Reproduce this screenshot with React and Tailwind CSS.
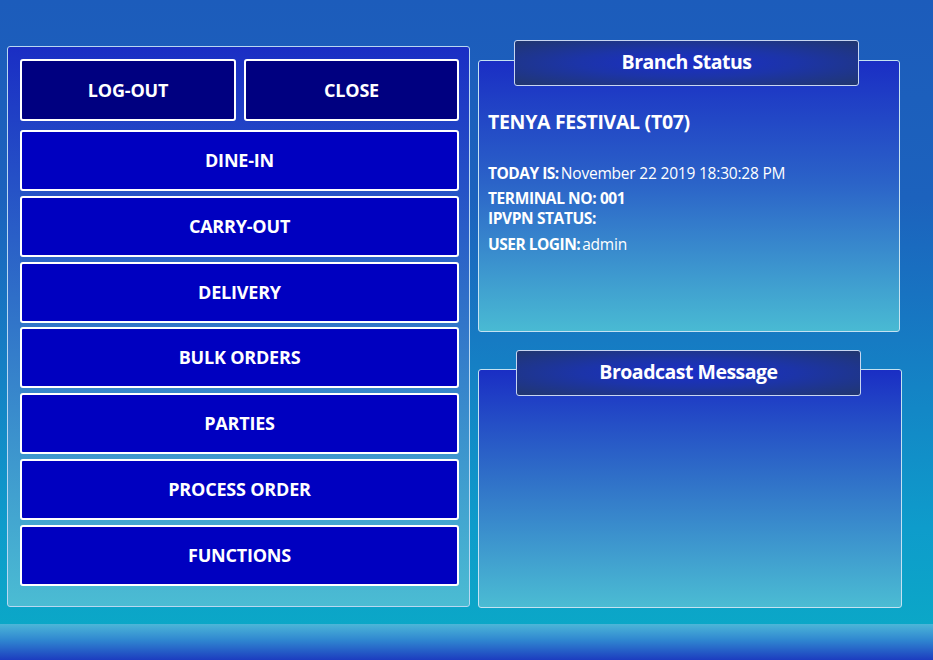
import React from "react";

const font = { fontFamily: '"Open Sans", "Noto Sans", sans-serif' };

function Btn({ children, dark, className = "" }) {
  return (
    <div
      className={`flex items-center justify-center rounded-[3px] border-2 border-white text-[18px] font-bold tracking-[-0.2px] text-white ${
        dark ? "bg-[#000080]" : "bg-[#0000c0]"
      } ${className}`}
    >
      {children}
    </div>
  );
}

function Tab({ children }) {
  return (
    <div className="relative z-10 mx-auto flex h-[46px] w-[345px] items-center justify-center rounded-[3px] border border-[#c8d6f2] bg-[radial-gradient(ellipse_at_center,#1a2ec8_0%,#1c34a8_45%,#21376f_100%)] pb-[3px] text-[19.5px] font-bold tracking-[-0.5px] text-white">
      {children}
    </div>
  );
}

export default function App() {
  const items = ["DINE-IN", "CARRY-OUT", "DELIVERY", "BULK ORDERS", "PARTIES", "PROCESS ORDER", "FUNCTIONS"];
  return (
    <div style={font} className="flex h-[660px] w-[933px] flex-col overflow-hidden bg-[linear-gradient(180deg,#1c5cbb_0%,#1c62bd_30%,#0e9ccb_80%,#0aabc6_100%)]">
      <div className="flex flex-1 items-start gap-[9px] pl-[7px] pt-[40px]">
        <div className="mt-[6px] flex h-[561px] w-[463px] flex-col rounded-[3px] border border-[#b8d8f2] bg-[linear-gradient(180deg,#1a2ec4_0%,#2f6fc8_45%,#4bbcd3_100%)] pl-[12px] pr-[10px] pt-[12px]">
          <div className="flex gap-[8px]">
            <Btn dark className="h-[62px] w-[216px]">LOG-OUT</Btn>
            <Btn dark className="h-[62px] w-[215px]">CLOSE</Btn>
          </div>
          <div className="mt-[9px] flex flex-col gap-[4.8px]">
            {items.map((t) => (
              <Btn key={t} className="h-[61px] w-[439px]">
                {t}
              </Btn>
            ))}
          </div>
        </div>
        <div className="-ml-[1px] flex flex-col">
          <div className="flex w-[422px] flex-col">
            <div className="ml-[36px] mr-auto w-[345px]">
              <Tab>Branch Status</Tab>
            </div>
            <div className="-mt-[26px] h-[272px] w-[422px] rounded-[3px] border border-[#c4e2f2] bg-[linear-gradient(180deg,#1a2ec4_0%,#2b63c8_45%,#49bad3_100%)] px-[9px] pt-[47px] text-white">
              <div className="text-[19.5px] font-bold leading-[28px] tracking-[-0.3px]">TENYA FESTIVAL (T07)</div>
              <div className="mt-[27px] text-[15.5px] leading-[20px] tracking-[-0.2px]">
                <span className="font-bold tracking-[-0.5px]">TODAY IS:</span>
                <span className="ml-[2px]">November 22 2019 18:30:28 PM</span>
              </div>
              <div className="mt-[5px] text-[15.5px] font-bold leading-[20px] tracking-[-0.4px]">TERMINAL NO: 001</div>
              <div className="text-[15.5px] font-bold leading-[20px] tracking-[-0.4px]">IPVPN STATUS:</div>
              <div className="mt-[6px] text-[15.5px] leading-[20px] tracking-[-0.2px]">
                <span className="font-bold tracking-[-0.5px]">USER LOGIN:</span>
                <span className="ml-[2px]">admin</span>
              </div>
            </div>
          </div>
          <div className="mt-[18px] flex w-[424px] flex-col">
            <div className="ml-[38px] mr-auto w-[345px]">
              <Tab>Broadcast Message</Tab>
            </div>
            <div className="-mt-[27px] h-[239px] w-[424px] rounded-[3px] border border-[#c4e2f2] bg-[linear-gradient(180deg,#1a2ec4_0%,#2f6fc8_45%,#4bbcd3_100%)]" />
          </div>
        </div>
      </div>
      <div className="h-[36px] bg-[linear-gradient(180deg,#4cb6d8_0%,#2f86d0_45%,#1c3cbf_100%)]" />
    </div>
  );
}
